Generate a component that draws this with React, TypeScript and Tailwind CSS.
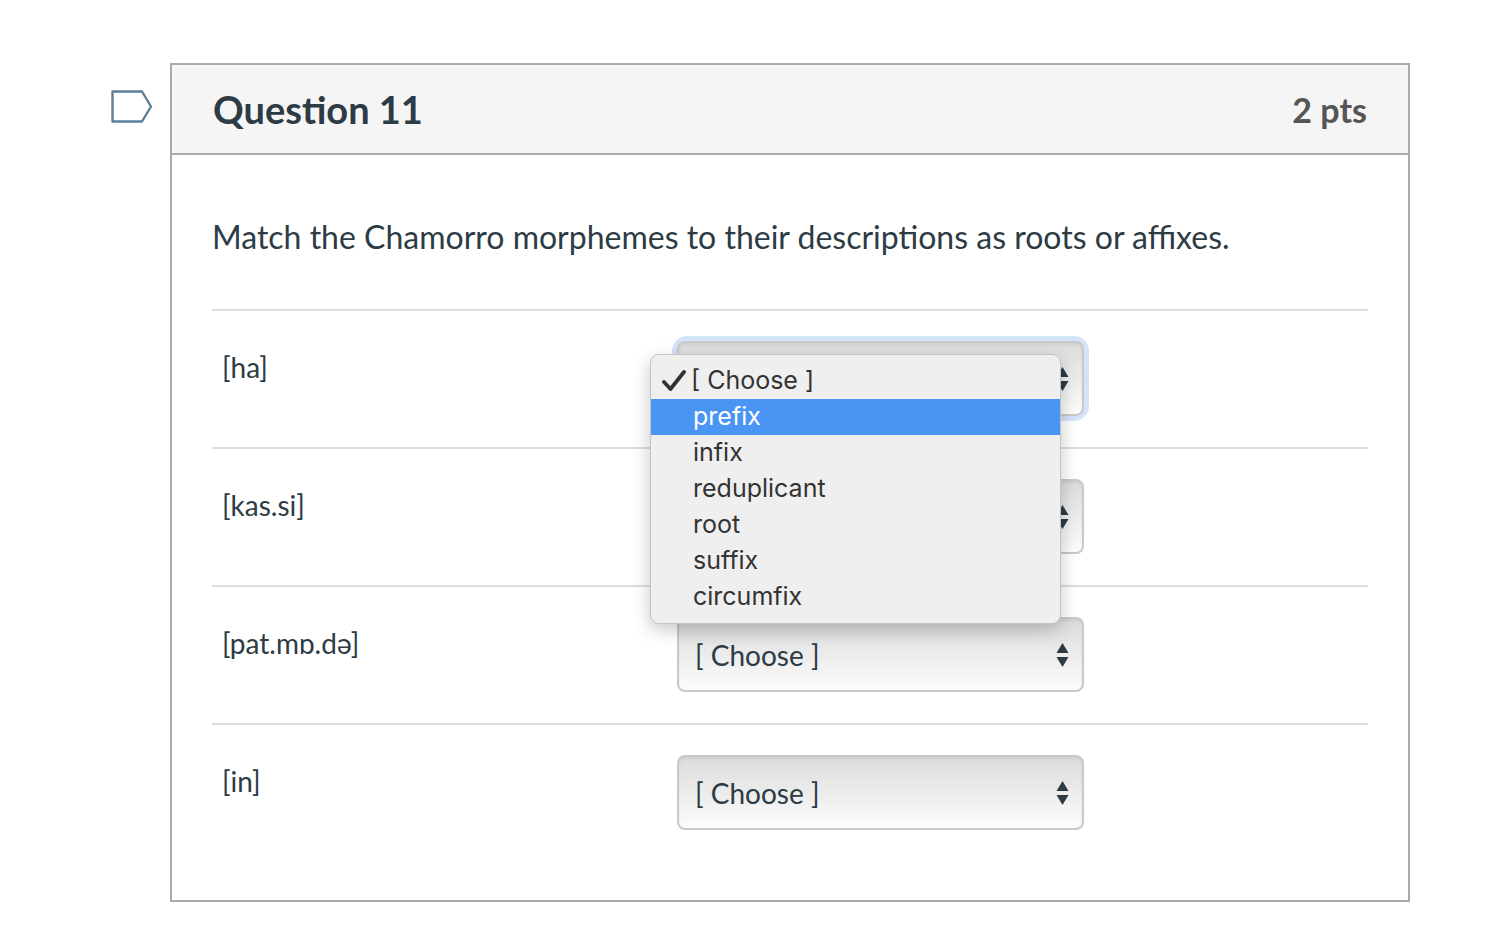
import React from "react";

const rows = ["[ha]", "[kas.si]", "[pat.mɒ.də]", "[in]"];
const options = ["prefix", "infix", "reduplicant", "root", "suffix", "circumfix"];

function Arrows() {
  return (
    <svg width="13" height="26" viewBox="0 0 13 26" className="shrink-0">
      <path d="M6.5 1 L12.5 11 L0.5 11 Z" fill="#2d3b45" />
      <path d="M0.5 15 L12.5 15 L6.5 25 Z" fill="#2d3b45" />
    </svg>
  );
}

function SelectBox({ focused, children }: { focused?: boolean; children?: React.ReactNode }) {
  return (
    <div className={`relative rounded-[10px] ${focused ? "shadow-[0_0_0_5px_#d3e3f8]" : ""}`}>
      <div className="flex h-[75px] w-[407px] items-center justify-between rounded-[8px] border-2 border-[#c9c9c9] bg-gradient-to-b from-[#dcdcdc] via-[#ececec] to-[#fcfcfc] pl-[16px] pr-[13px] shadow-[inset_0_2px_3px_rgba(0,0,0,0.06)]">
        <span className="text-[28px] text-[#2d3b45]">[ Choose ]</span>
        <Arrows />
      </div>
      {children}
    </div>
  );
}

function Menu() {
  return (
    <div className="absolute left-[-27px] top-[13px] z-10 w-[411px] rounded-[9px] border border-[#c4c4c4] bg-[#efefef] py-[8px] font-['Inter','Liberation_Sans',sans-serif] shadow-[0_6px_18px_rgba(0,0,0,0.22)]">
      <div className="flex h-[36px] items-center text-[25px] text-[#333]">
        <svg width="24" height="22" viewBox="0 0 24 22" className="ml-[11px] mr-[5px]">
          <path d="M2 12 L8.5 19 L22 2" fill="none" stroke="#333" strokeWidth="3.8" strokeLinecap="round" strokeLinejoin="round" />
        </svg>
        <span>[ Choose ]</span>
      </div>
      {options.map((o, i) => (
        <div
          key={o}
          className={`flex h-[36px] items-center pl-[42px] text-[25px] ${i === 0 ? "bg-[#4a94f4] text-white" : "text-[#333]"}`}
        >
          {o}
        </div>
      ))}
    </div>
  );
}

export default function App() {
  return (
    <div className="min-h-[952px] bg-white pt-[63px] font-['Lato','Liberation_Sans',sans-serif]">
      <div className="flex">
        <div className="w-[170px] shrink-0 pl-[111px] pt-[27px]">
          <svg width="42" height="33" viewBox="0 0 42 33">
            <path d="M1.5 1.5 H31 L40 16.5 L31 31.5 H1.5 Z" fill="none" stroke="#5b7f99" strokeWidth="2.4" strokeLinejoin="round" />
          </svg>
        </div>
        <div className="w-[1240px] border-2 border-[#aaaaaa]">
          <div className="flex h-[90px] items-center justify-between border-b-2 border-[#aaaaaa] bg-[#f5f5f5] px-[41px]">
            <h2 className="text-[38px] font-bold text-[#2d3b45]">Question 11</h2>
            <span className="text-[34px] font-bold text-[#555]">2 pts</span>
          </div>
          <div className="px-[40px] pb-[39px] pt-[63px]">
            <p className="text-[32px] leading-[38px] text-[#2d3b45]">
              Match the Chamorro morphemes to their descriptions as roots or affixes.
            </p>
            <div className="mt-[53px]">
              {rows.map((r, i) => (
                <div key={r} className="flex h-[138px] border-t-2 border-[#dddddd]">
                  <div className="w-[465px] shrink-0 pl-[10px] pt-[40px] text-[28px] leading-[32px] text-[#2d3b45]">
                    {r}
                  </div>
                  <div className="pt-[30px]">
                    {i === 0 ? (
                      <SelectBox focused>
                        <Menu />
                      </SelectBox>
                    ) : (
                      <SelectBox />
                    )}
                  </div>
                </div>
              ))}
            </div>
          </div>
        </div>
      </div>
    </div>
  );
}
